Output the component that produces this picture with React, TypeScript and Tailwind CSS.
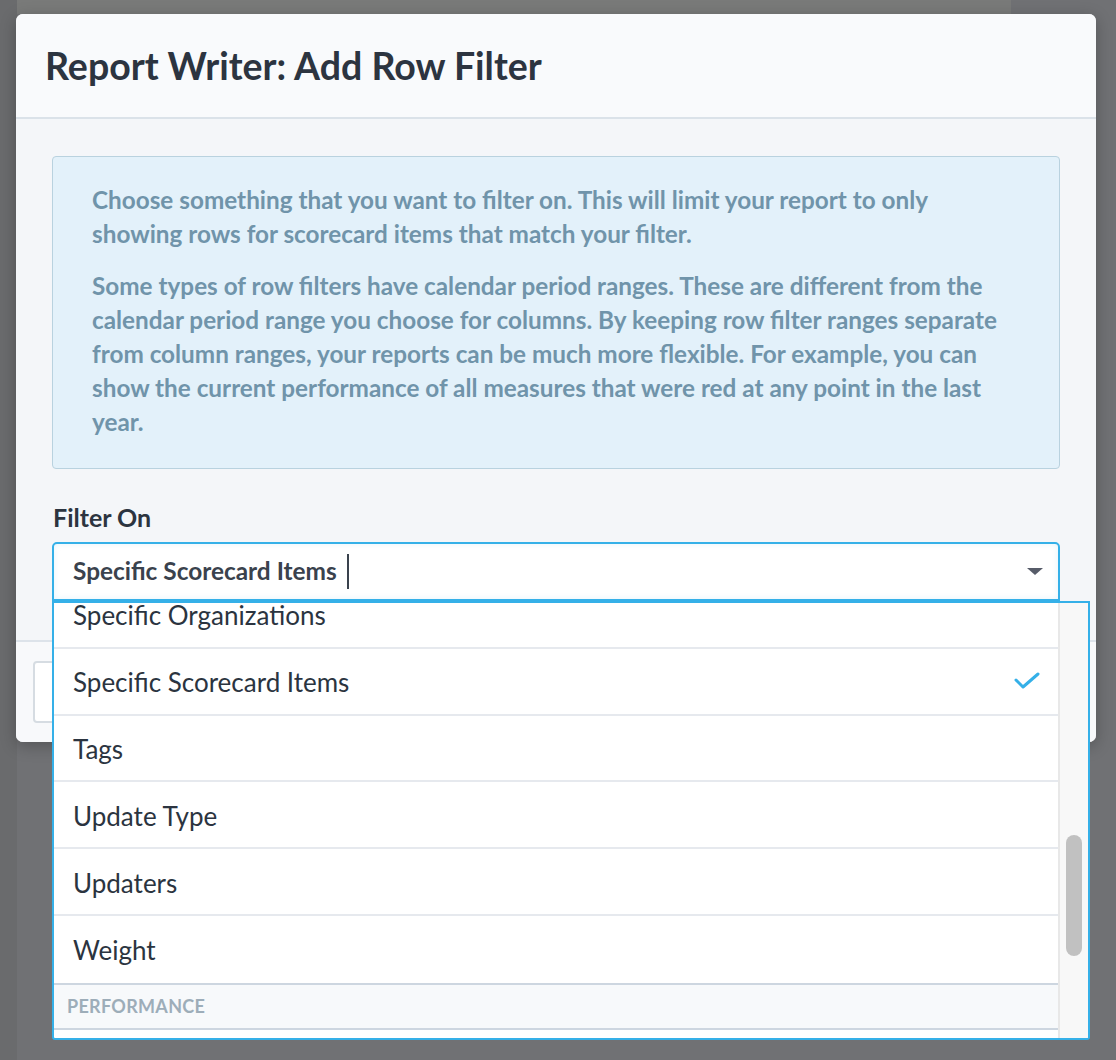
import React from "react";

const items = [
  "Specific Organizations",
  "Specific Scorecard Items",
  "Tags",
  "Update Type",
  "Updaters",
  "Weight",
];

export default function App() {
  return (
    <div
      className="relative w-[1116px] h-[1060px] overflow-hidden bg-[#707174]"
      style={{ fontFamily: "Lato, 'Noto Sans', sans-serif" }}
    >
      {/* background page hints */}
      <div className="absolute left-[17px] top-0 w-[994px] h-[14px] bg-[#797a79]" />
      <div className="absolute left-0 top-0 w-[17px] h-[1060px] bg-[#6a6b6d]" />

      <div className="relative ml-[16px] mt-[14px] w-[1080px] h-[728px] rounded-[7px] bg-[#f4f6f9] shadow-[0_4px_16px_rgba(0,0,0,0.25)] flex flex-col">
        {/* header */}
        <div className="h-[105px] shrink-0 flex items-center pl-[29px] bg-[#f9fafc] rounded-t-[7px] border-b-2 border-[#dbe2e9]">
          <h1 className="text-[37.5px] leading-[46px] font-bold text-[#2c3440]">
            Report Writer: Add Row Filter
          </h1>
        </div>

        {/* body */}
        <div className="h-[521px] shrink-0 px-[36px] pt-[37px]">
          <div className="h-[313px] rounded-[4px] border border-[#b9d2df] bg-[#e3f1fa] pl-[39px] pr-[20px] pt-[26px] text-[24.3px] leading-[34px] font-bold text-[#7094aa] whitespace-nowrap">
            <p>
              Choose something that you want to filter on. This will limit your report to only
              <br />
              showing rows for scorecard items that match your filter.
            </p>
            <p className="mt-[18px]">
              Some types of row filters have calendar period ranges. These are different from the
              <br />
              calendar period range you choose for columns. By keeping row filter ranges separate
              <br />
              from column ranges, your reports can be much more flexible. For example, you can
              <br />
              show the current performance of all measures that were red at any point in the last
              <br />
              year.
            </p>
          </div>

          <div className="mt-[33px] text-[25px] leading-[30px] font-bold text-[#2c3440] pl-[1px]">
            Filter On
          </div>

          <div className="relative mt-[10px]">
            <div className="h-[59px] rounded-t-[5px] border-2 border-[#35b0e8] bg-white flex items-center pl-[19px] pr-[15px] shadow-[inset_0_0_6px_rgba(53,176,232,0.12)]">
              <span className="text-[24.4px] font-bold text-[#3a424d]">Specific Scorecard Items</span>
              <span className="ml-[10px] w-[2px] h-[35px] bg-[#3a424d]" />
              <span className="ml-auto">
                <svg width="16" height="7" viewBox="0 0 16 7">
                  <polygon points="0,0 16,0 8,7" fill="#575c69" />
                </svg>
              </span>
            </div>

            {/* dropdown menu */}
            <div className="absolute left-0 top-full w-[1038px] h-[439px] border-2 border-[#35b0e8] rounded-b-[3px] bg-white flex overflow-hidden z-10">
              <div className="flex-1 overflow-hidden">
                <div className="-mt-[21px]">
                  {items.map((it, i) => (
                    <div
                      key={it}
                      className={`h-[66.8px] flex items-center pl-[19px] pr-[18px] text-[26px] text-[#2b3440] ${
                        i < items.length - 1 ? "border-b-2 border-[#e6e9ee]" : ""
                      }`}
                    >
                      <span className="mt-[3px]">{it}</span>
                      {it === "Specific Scorecard Items" && (
                        <svg className="ml-auto" width="26" height="18" viewBox="0 0 26 18">
                          <polyline
                            points="2,8 9,15 24,2"
                            fill="none"
                            stroke="#35b0e8"
                            strokeWidth="3"
                            strokeLinecap="round"
                            strokeLinejoin="round"
                          />
                        </svg>
                      )}
                    </div>
                  ))}
                  <div className="h-[47px] border-t-2 border-b-2 border-[#cdd6e0] bg-[#f7f9fb] flex items-center pl-[13px] text-[18px] font-bold text-[#9dadb9] tracking-[0.3px]">
                    PERFORMANCE
                  </div>
                </div>
              </div>
              <div className="w-[30px] shrink-0 border-l-2 border-[#e8e8e8] bg-[#f8f8f8] pt-[232px] pl-[6px]">
                <div className="w-[16px] h-[121px] rounded-full bg-[#c1c1c1]" />
              </div>
            </div>
          </div>
        </div>

        {/* footer */}
        <div className="flex-1 border-t-2 border-[#dde3ea] bg-[#f8f9fb] rounded-b-[7px] pl-[17px] pt-[19px]">
          <div className="w-[120px] h-[62px] rounded-[4px] border-2 border-[#d6dce2] bg-white" />
        </div>
      </div>
    </div>
  );
}
